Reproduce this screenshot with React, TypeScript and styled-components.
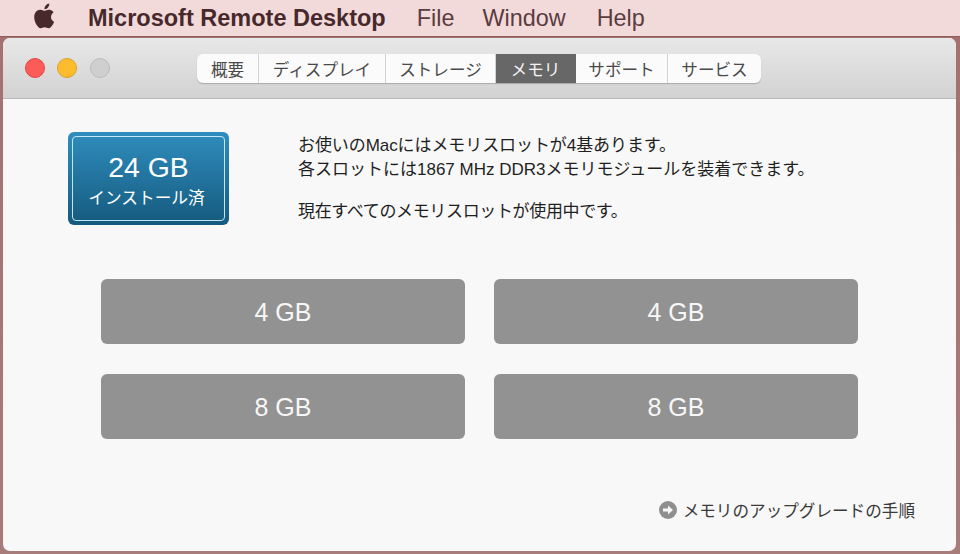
import styled, { createGlobalStyle } from 'styled-components';

const GlobalStyle = createGlobalStyle`
  html, body {
    margin: 0;
    padding: 0;
    width: 960px;
    height: 554px;
    overflow: hidden;
    background: #a67a7a;
    font-family: "Liberation Sans", "Noto Sans CJK JP", sans-serif;
  }
`;

const Screen = styled.div`
  width: 960px;
  height: 554px;
  display: flex;
  flex-direction: column;
  background: linear-gradient(180deg, #a56f6e 0%, #a87c7b 100%);
`;

const MenuBar = styled.div`
  height: 36px;
  flex: none;
  display: flex;
  align-items: center;
  padding-left: 32px;
  background: #f3dada;
  border-bottom: 1px solid #8d5d5e;
  color: #47292c;
`;

const AppleLogo = styled.svg`
  width: 26px;
  height: 30px;
  margin: -5px 30px 0 0;
  fill: #47292c;
`;

const AppName = styled.span`
  font-size: 23.5px;
  font-weight: 700;
  margin-right: 31px;
`;

const MenuItem = styled.span<{ $gap: number }>`
  font-size: 23.4px;
  margin-right: ${(p) => p.$gap}px;
  color: #5a3c3f;
`;

const Window = styled.div`
  margin: 1px 4px 3px 3px;
  flex: 1;
  display: flex;
  flex-direction: column;
  border-radius: 7px;
  overflow: hidden;
  background: #f8f8f8;
`;

const TitleBar = styled.div`
  height: 61px;
  flex: none;
  box-sizing: border-box;
  display: grid;
  grid-template-columns: 172px 564px;
  align-items: center;
  padding-left: 22px;
  background: linear-gradient(180deg, #e8e8e8 0%, #d2d2d2 100%);
  border-bottom: 1px solid #b9b9b9;
`;

const Lights = styled.div`
  display: flex;
  gap: 12.25px;
`;

const Light = styled.span<{ $color: string; $edge: string }>`
  width: 20px;
  height: 20px;
  box-sizing: border-box;
  border-radius: 50%;
  background: ${(p) => p.$color};
  border: 1px solid ${(p) => p.$edge};
`;

const Tabs = styled.div`
  display: flex;
  height: 29px;
  margin-top: 1px;
  border-radius: 6px;
  overflow: hidden;
  background: #fbfbfb;
  box-shadow: 0 1px 1px rgba(0, 0, 0, 0.22);
`;

const Tab = styled.div<{ $width: number; $active?: boolean }>`
  width: ${(p) => p.$width}px;
  box-sizing: border-box;
  display: flex;
  align-items: center;
  justify-content: center;
  font-size: 16.6px;
  color: ${(p) => (p.$active ? '#f4f4f4' : '#4a4a4a')};
  background: ${(p) => (p.$active ? '#676767' : 'transparent')};
  border-right: 1px solid ${(p) => (p.$active ? '#676767' : '#d2d2d2')};
  &:last-child {
    border-right: 0;
  }
`;

const Content = styled.div`
  flex: 1;
  display: flex;
  flex-direction: column;
  padding: 33px 41px 0 65px;
`;

const Summary = styled.div`
  display: flex;
  align-items: flex-start;
`;

const Badge = styled.div`
  width: 161px;
  height: 93px;
  flex: none;
  box-sizing: border-box;
  padding: 4px;
  border-radius: 6px;
  background: linear-gradient(180deg, #2f8dbd 0%, #155a7e 100%);
`;

const BadgeInner = styled.div`
  height: 100%;
  box-sizing: border-box;
  display: flex;
  flex-direction: column;
  align-items: center;
  border: 1.5px solid #c3e6f5;
  border-radius: 4px;
  color: #fff;
  padding-top: 14px;
`;

const BadgeSize = styled.div`
  font-size: 28.4px;
  line-height: 32px;
`;

const BadgeLabel = styled.div`
  margin-top: 5px;
  padding-right: 4px;
  font-size: 16.7px;
  line-height: 22px;
`;

const Description = styled.div`
  margin-left: 69px;
  padding-top: 2px;
  font-size: 17px;
  line-height: 24px;
  color: #1f1f1f;
`;

const DescriptionLine = styled.div<{ $tracking?: number; $gapAbove?: number }>`
  letter-spacing: ${(p) => p.$tracking ?? 0}px;
  margin-top: ${(p) => p.$gapAbove ?? 0}px;
`;

const Slots = styled.div`
  margin: 54px 0 0 33px;
  display: grid;
  grid-template-columns: 364px 364px;
  column-gap: 29px;
  row-gap: 30px;
`;

const Slot = styled.div`
  height: 65px;
  box-sizing: border-box;
  padding-top: 2px;
  display: flex;
  align-items: center;
  justify-content: center;
  border-radius: 6px;
  background: #929292;
  color: #f7f7f7;
  font-size: 25px;
`;

const UpgradeLink = styled.div`
  margin-top: 59px;
  align-self: flex-end;
  display: flex;
  align-items: center;
  gap: 6px;
  font-size: 16.6px;
  color: #3a3a3a;
`;

const ArrowIcon = styled.svg`
  width: 18px;
  height: 18px;
`;

const tabs = [
  { label: '概要', width: 62 },
  { label: 'ディスプレイ', width: 127 },
  { label: 'ストレージ', width: 110 },
  { label: 'メモリ', width: 80, active: true },
  { label: 'サポート', width: 92 },
  { label: 'サービス', width: 93 },
];

const slots = ['4 GB', '4 GB', '8 GB', '8 GB'];

export default function App() {
  return (
    <Screen>
      <GlobalStyle />
      <MenuBar>
        <AppleLogo viewBox="0 0 24 28">
          <path d="M17.6 14.8c0-2.9 2.4-4.3 2.5-4.4-1.4-2-3.5-2.3-4.2-2.3-1.8-.2-3.5 1-4.4 1-.9 0-2.3-1-3.8-1-2 0-3.8 1.100-4.800 2.900-2 3.500-.5 8.800 1.500 11.600 1 1.400 2.100 3 3.600 2.900 1.400-.1 2-.9 3.700-.9 1.700 0 2.200.9 3.700.9 1.500 0 2.500-1.400 3.500-2.800 1.100-1.600 1.500-3.200 1.600-3.300-.1 0-3-1.100-2.900-4.600zM14.800 6.100c.8-1 1.300-2.300 1.200-3.700-1.100.1-2.500.8-3.300 1.800-.7.8-1.400 2.200-1.200 3.500 1.300.1 2.500-.6 3.300-1.600z" />
        </AppleLogo>
        <AppName>Microsoft Remote Desktop</AppName>
        <MenuItem $gap={28}>File</MenuItem>
        <MenuItem $gap={31}>Window</MenuItem>
        <MenuItem $gap={0}>Help</MenuItem>
      </MenuBar>
      <Window>
        <TitleBar>
          <Lights>
            <Light $color="#fc5b57" $edge="#e2463f" />
            <Light $color="#fdbc2e" $edge="#e0a028" />
            <Light $color="#cfcfcf" $edge="#bdbdbd" />
          </Lights>
          <Tabs>
            {tabs.map((tab) => (
              <Tab key={tab.label} $width={tab.width} $active={tab.active}>
                {tab.label}
              </Tab>
            ))}
          </Tabs>
        </TitleBar>
        <Content>
          <Summary>
            <Badge>
              <BadgeInner>
                <BadgeSize>24 GB</BadgeSize>
                <BadgeLabel>インストール済</BadgeLabel>
              </BadgeInner>
            </Badge>
            <Description>
              <DescriptionLine $tracking={-0.08}>お使いのMacにはメモリスロットが4基あります。</DescriptionLine>
              <DescriptionLine>各スロットには1867 MHz DDR3メモリモジュールを装着できます。</DescriptionLine>
              <DescriptionLine $tracking={-0.35} $gapAbove={18}>現在すべてのメモリスロットが使用中です。</DescriptionLine>
            </Description>
          </Summary>
          <Slots>
            {slots.map((size, index) => (
              <Slot key={index}>{size}</Slot>
            ))}
          </Slots>
          <UpgradeLink>
            <ArrowIcon viewBox="0 0 18 18">
              <circle cx="9" cy="9" r="9" fill="#8f8f8f" />
              <path d="M4 7.500h5V4.500L14 9l-5 4.500v-3H4z" fill="#f8f8f8" />
            </ArrowIcon>
            メモリのアップグレードの手順
          </UpgradeLink>
        </Content>
      </Window>
    </Screen>
  );
}
